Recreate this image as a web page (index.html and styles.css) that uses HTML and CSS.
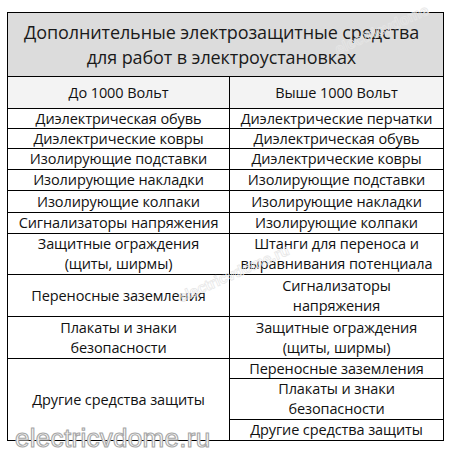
FILE: index.html
```html
<!DOCTYPE html>
<html lang="ru">
<head>
<meta charset="utf-8">
<title>Дополнительные электрозащитные средства</title>
<link rel="stylesheet" href="styles.css">
</head>
<body>
<div class="page">
  <div class="grid">
    <div class="cell title">Дополнительные электрозащитные средства<br>для работ в электроустановках</div>
    <div class="cell head">До 1000 Вольт</div>
    <div class="cell head">Выше 1000 Вольт</div>

    <div class="cell">Диэлектрическая обувь</div>
    <div class="cell">Диэлектрические перчатки</div>
    <div class="cell">Диэлектрические ковры</div>
    <div class="cell">Диэлектрическая обувь</div>
    <div class="cell">Изолирующие подставки</div>
    <div class="cell">Диэлектрические ковры</div>
    <div class="cell">Изолирующие накладки</div>
    <div class="cell">Изолирующие подставки</div>
    <div class="cell">Изолирующие колпаки</div>
    <div class="cell">Изолирующие накладки</div>
    <div class="cell">Сигнализаторы напряжения</div>
    <div class="cell">Изолирующие колпаки</div>

    <div class="cell">Защитные ограждения<br>(щиты, ширмы)</div>
    <div class="cell">Штанги для переноса и<br>выравнивания потенциала</div>
    <div class="cell">Переносные заземления</div>
    <div class="cell">Сигнализаторы<br>напряжения</div>
    <div class="cell">Плакаты и знаки<br>безопасности</div>
    <div class="cell">Защитные ограждения<br>(щиты, ширмы)</div>

    <div class="cell other">Другие средства защиты</div>
    <div class="cell">Переносные заземления</div>
    <div class="cell">Плакаты и знаки<br>безопасности</div>
    <div class="cell">Другие средства защиты</div>
  </div>

  <div class="wm wm-bottom">electricvdome.ru</div>
  <div class="wm wm-faint wm-tr">electricvdome</div>
  <div class="wm wm-faint wm-m1">electricvdome.ru</div>
</div>
</body>
</html>
```
FILE: styles.css
```css
html, body {
  margin: 0;
  padding: 0;
  background: #ffffff;
}

.page {
  position: relative;
  width: 450px;
  height: 458px;
  overflow: hidden;
  padding: 12px 0 0 7px;
  box-sizing: border-box;
  font-family: "Open Sans", "Liberation Sans", sans-serif;
  color: #111111;
}

.grid {
  display: grid;
  width: 437px;
  box-sizing: border-box;
  grid-template-columns: 221px 213px;
  grid-template-rows: 63px 31px 19px 19px 20px 20px 21px 20px 40px 41px 41px 19px 40px 20px;
  gap: 1px;
  padding: 1px;
  background: #000000;
}

.cell {
  background: #ffffff;
  display: flex;
  align-items: center;
  justify-content: center;
  text-align: center;
  font-size: 14.5px;
  line-height: 20px;
  white-space: nowrap;
  letter-spacing: -0.1px;
}

.title {
  grid-column: 1 / 3;
  background: #dcdcdc;
  font-size: 18px;
  line-height: 25px;
  color: #1a1a1a;
  padding: 1px 8px 0 0;
}

.head {
  background: #f3f3f3;
}

.other {
  grid-row: 12 / 15;
}

.wm {
  position: absolute;
  font-family: "Liberation Sans", Arial, sans-serif;
  white-space: nowrap;
}

.wm-bottom {
  left: 15px;
  top: 423px;
  font-size: 26px;
  letter-spacing: 0.3px;
  color: #ffffff;
  -webkit-text-stroke: 1.1px #a8a8a8;
  text-shadow: 0 0 1px #d0d0d0;
}

.wm-faint {
  font-size: 15px;
  font-weight: bold;
  color: transparent;
  -webkit-text-stroke: 0.7px #e6e6e6;
  transform: rotate(-24deg);
  transform-origin: left top;
}

.wm-tr {
  left: 332px;
  top: 42px;
}

.wm-m1 {
  left: 175px;
  top: 290px;
}
```
